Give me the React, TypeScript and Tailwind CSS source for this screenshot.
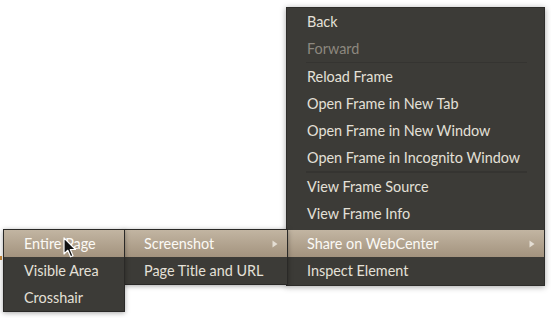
import React from "react";

const font = { fontFamily: 'Lato, "DejaVu Sans", "Liberation Sans", sans-serif' };

function Arrow() {
  return (
    <svg width="6" height="8" viewBox="0 0 6 8" className="shrink-0">
      <path d="M0.5 0.5 L5.5 4 L0.5 7.5 Z" fill="#e4ded4" />
    </svg>
  );
}

type RowProps = {
  label: string;
  active?: boolean;
  disabled?: boolean;
  sub?: boolean;
};

function Row({ label, active, disabled, sub }: RowProps) {
  const base =
    "h-[27px] flex items-center justify-between pl-[20px] pr-[9px] whitespace-nowrap text-[14.4px] leading-none";
  const cls = active
    ? `${base} bg-gradient-to-b from-[#c2b5a2] to-[#a3937e] text-[#fbf9f5]`
    : disabled
    ? `${base} text-[#8d887f]`
    : `${base} text-[#e4e0d8]`;
  return (
    <div className={cls}>
      <span className="pt-[1px]">{label}</span>
      {sub ? <Arrow /> : null}
    </div>
  );
}

function Sep({ h }: { h: number }) {
  return (
    <div
      className={h === 1 ? "h-[1px] flex" : "h-[2px] flex flex-col justify-center"}
    >
      <div className="ml-[19px] mr-[17px] h-[1px] flex-1 bg-[#353431]" />
    </div>
  );
}

export default function App() {
  return (
    <div className="relative w-[551px] h-[318px] bg-white overflow-hidden" style={font}>
      {/* stray underlying page mark */}
      <div className="absolute left-0 top-[256px] w-[2px] h-[4px] bg-[#c98a3a]" />

      {/* Main context menu */}
      <div className="absolute left-[286px] top-[7px] w-[259px] h-[279px] bg-[#3c3b37] border border-[#2e2d2a] shadow-[0_1px_6px_rgba(0,0,0,0.35)] flex flex-col">
        <Row label="Back" />
        <Row label="Forward" disabled />
        <Sep h={1} />
        <Row label="Reload Frame" />
        <Row label="Open Frame in New Tab" />
        <Row label="Open Frame in New Window" />
        <Row label="Open Frame in Incognito Window" />
        <Sep h={2} />
        <Row label="View Frame Source" />
        <Row label="View Frame Info" />
        <div className="h-[3px]" />
        <Row label="Share on WebCenter" active sub />
        <Row label="Inspect Element" />
      </div>

      {/* Submenu 1 */}
      <div className="absolute left-[123px] top-[229px] w-[165px] h-[56px] bg-[#3c3b37] border border-[#2a2927] shadow-[0_1px_5px_rgba(0,0,0,0.35)] flex flex-col">
        <Row label="Screenshot" active sub />
        <Row label="Page Title and URL" />
      </div>

      {/* Submenu 2 */}
      <div className="absolute left-[3px] top-[229px] w-[122px] h-[83px] bg-[#3c3b37] border border-[#2a2927] shadow-[0_1px_5px_rgba(0,0,0,0.35)] flex flex-col">
        <Row label="Entire Page" active />
        <Row label="Visible Area" />
        <Row label="Crosshair" />
      </div>

      {/* Mouse cursor */}
      <svg
        className="absolute left-[63px] top-[237px]"
        width="14"
        height="22"
        viewBox="0 0 14 22"
      >
        <path
          d="M1 1 L1 17 L4.8 13.3 L7.6 19.8 L10 18.8 L7.3 12.5 L12.5 12.5 Z"
          fill="#111"
          stroke="#fff"
          strokeWidth="1.2"
          strokeLinejoin="round"
        />
      </svg>
    </div>
  );
}
